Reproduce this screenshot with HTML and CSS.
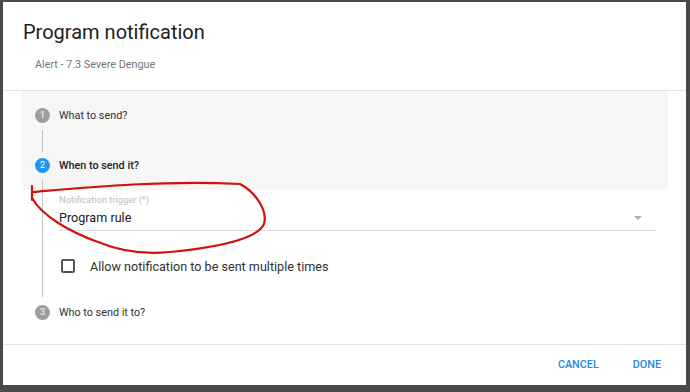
FILE: index.html
```html
<!DOCTYPE html>
<html lang="en">
<head>
    <meta charset="UTF-8">
    <meta name="viewport" content="width=device-width, initial-scale=1.0">
    <title>Program notification</title>
    <link rel="stylesheet" href="styles.css">
</head>
<body>
    <div class="page">
        <div class="dialog">
            <div class="dialog-head">
                <h1 class="dialog-title">Program notification</h1>
                <div class="dialog-subtitle">Alert - 7.3 Severe Dengue</div>
            </div>

            <div class="dialog-body">
                <div class="steps-top">
                    <div class="step-head">
                        <span class="step-num">1</span>
                        <span class="step-label">What to send?</span>
                    </div>
                    <div class="connector"></div>
                    <div class="step-head active">
                        <span class="step-num">2</span>
                        <span class="step-label">When to send it?</span>
                    </div>
                    <div class="connector stub"></div>
                </div>

                <div class="step-content">
                    <div class="field">
                        <div class="field-label">Notification trigger (*)</div>
                        <div class="field-input">
                            <span>Program rule</span>
                            <span class="arrow"></span>
                        </div>
                    </div>
                    <label class="check-row">
                        <span class="checkbox"></span>
                        <span>Allow notification to be sent multiple times</span>
                    </label>
                </div>

                <div class="step-head last">
                    <span class="step-num">3</span>
                    <span class="step-label">Who to send it to?</span>
                </div>
            </div>

            <div class="dialog-actions">
                <button class="action cancel">CANCEL</button>
                <button class="action">DONE</button>
            </div>
        </div>

        <!-- red pen mark drawn over the screenshot -->
        <svg class="scribble" width="690" height="392" viewBox="0 0 690 392">
            <path d="M32 184 L32 198" />
            <path d="M33 190 C80 186 160 178 240 182 C255 190 268 208 264 222 C258 236 220 245 170 250 C140 253 115 247 98 240 C70 230 42 214 32 196" />
        </svg>
    </div>
</body>
</html>
```

FILE: styles.css
```css
body {
    margin: 0;
    background-color: #4a4a4a;
    font-family: Roboto, "Noto Sans", Arial, sans-serif;
    overflow: hidden;
}
.page {
    position: relative;
    width: 690px;
    height: 392px;
}
.dialog {
    margin: 2px 4px 0 3px;
    width: 683px;
    height: 383px;
    background-color: white;
    display: flex;
    flex-direction: column;
}

.dialog-head {
    padding: 18px 20px 17px 20px;
    border-bottom: 1px solid #e2e2e2;
}
.dialog-title {
    margin: 0;
    font-size: 20px;
    line-height: 24px;
    font-weight: 400;
    color: #212121;
}
.dialog-subtitle {
    margin: 13px 0 0 12px;
    font-size: 10.8px;
    line-height: 16px;
    color: #757575;
}

.dialog-body {
    padding: 0 18px 24px 19px;
    flex: 1;
}
.steps-top {
    background-color: #f6f6f6;
    padding: 17px 0 0 13px;
}
.step-head {
    display: flex;
    align-items: center;
    height: 15px;
}
.step-head.last {
    margin: 8px 0 0 13px;
}
.step-num {
    width: 15px;
    height: 15px;
    border-radius: 50%;
    background-color: #9e9e9e;
    color: white;
    font-size: 9px;
    line-height: 15px;
    text-align: center;
}
.step-label {
    margin-left: 9px;
    font-size: 10.8px;
    color: #303030;
}
.step-head.active .step-num {
    background-color: #2196f3;
}
.step-head.active .step-label {
    font-weight: 500;
    color: #212121;
}
.connector {
    margin: 7px 0 6px 7px;
    height: 22px;
    border-left: 1px solid #c4c4c4;
}
.connector.stub {
    margin: 7px 0 0 7px;
    height: 10px;
}

.step-content {
    margin-left: 20px;
    border-left: 1px solid #c4c4c4;
    padding: 3.5px 12px 22px 16px;
}
.field-label {
    font-size: 9.3px;
    line-height: 12px;
    color: #bdbdbd;
}
.field-input {
    margin-top: 3.5px;
    display: flex;
    align-items: center;
    justify-content: space-between;
    font-size: 12.6px;
    line-height: 18px;
    color: #212121;
    padding-bottom: 3px;
    border-bottom: 1px solid #dcdcdc;
}
.arrow {
    margin-right: 14px;
    width: 0;
    height: 0;
    border-left: 4.5px solid transparent;
    border-right: 4.5px solid transparent;
    border-top: 4.5px solid #b0b0b0;
}
.check-row {
    margin-top: 26px;
    height: 18px;
    display: flex;
    align-items: center;
    font-size: 12.6px;
    color: #303030;
}
.checkbox {
    width: 14px;
    height: 14px;
    box-sizing: border-box;
    border: 2px solid #555;
    border-radius: 2px;
    margin: 0 15px 0 2px;
}

.dialog-actions {
    height: 40px;
    border-top: 1px solid #e2e2e2;
    display: flex;
    justify-content: flex-end;
    align-items: center;
    padding-right: 17px;
}
.action {
    background: none;
    border: none;
    padding: 0 8px;
    line-height: 36px;
    font-family: Roboto, Arial, sans-serif;
    font-size: 10.8px;
    font-weight: 500;
    color: #1e88e5;
    cursor: pointer;
}
.action.cancel {
    margin-right: 18px;
}

.scribble {
    position: absolute;
    top: 0;
    left: 0;
    pointer-events: none;
    fill: none;
    stroke: #d40f0f;
    stroke-width: 2.2;
    stroke-linecap: round;
}
```
